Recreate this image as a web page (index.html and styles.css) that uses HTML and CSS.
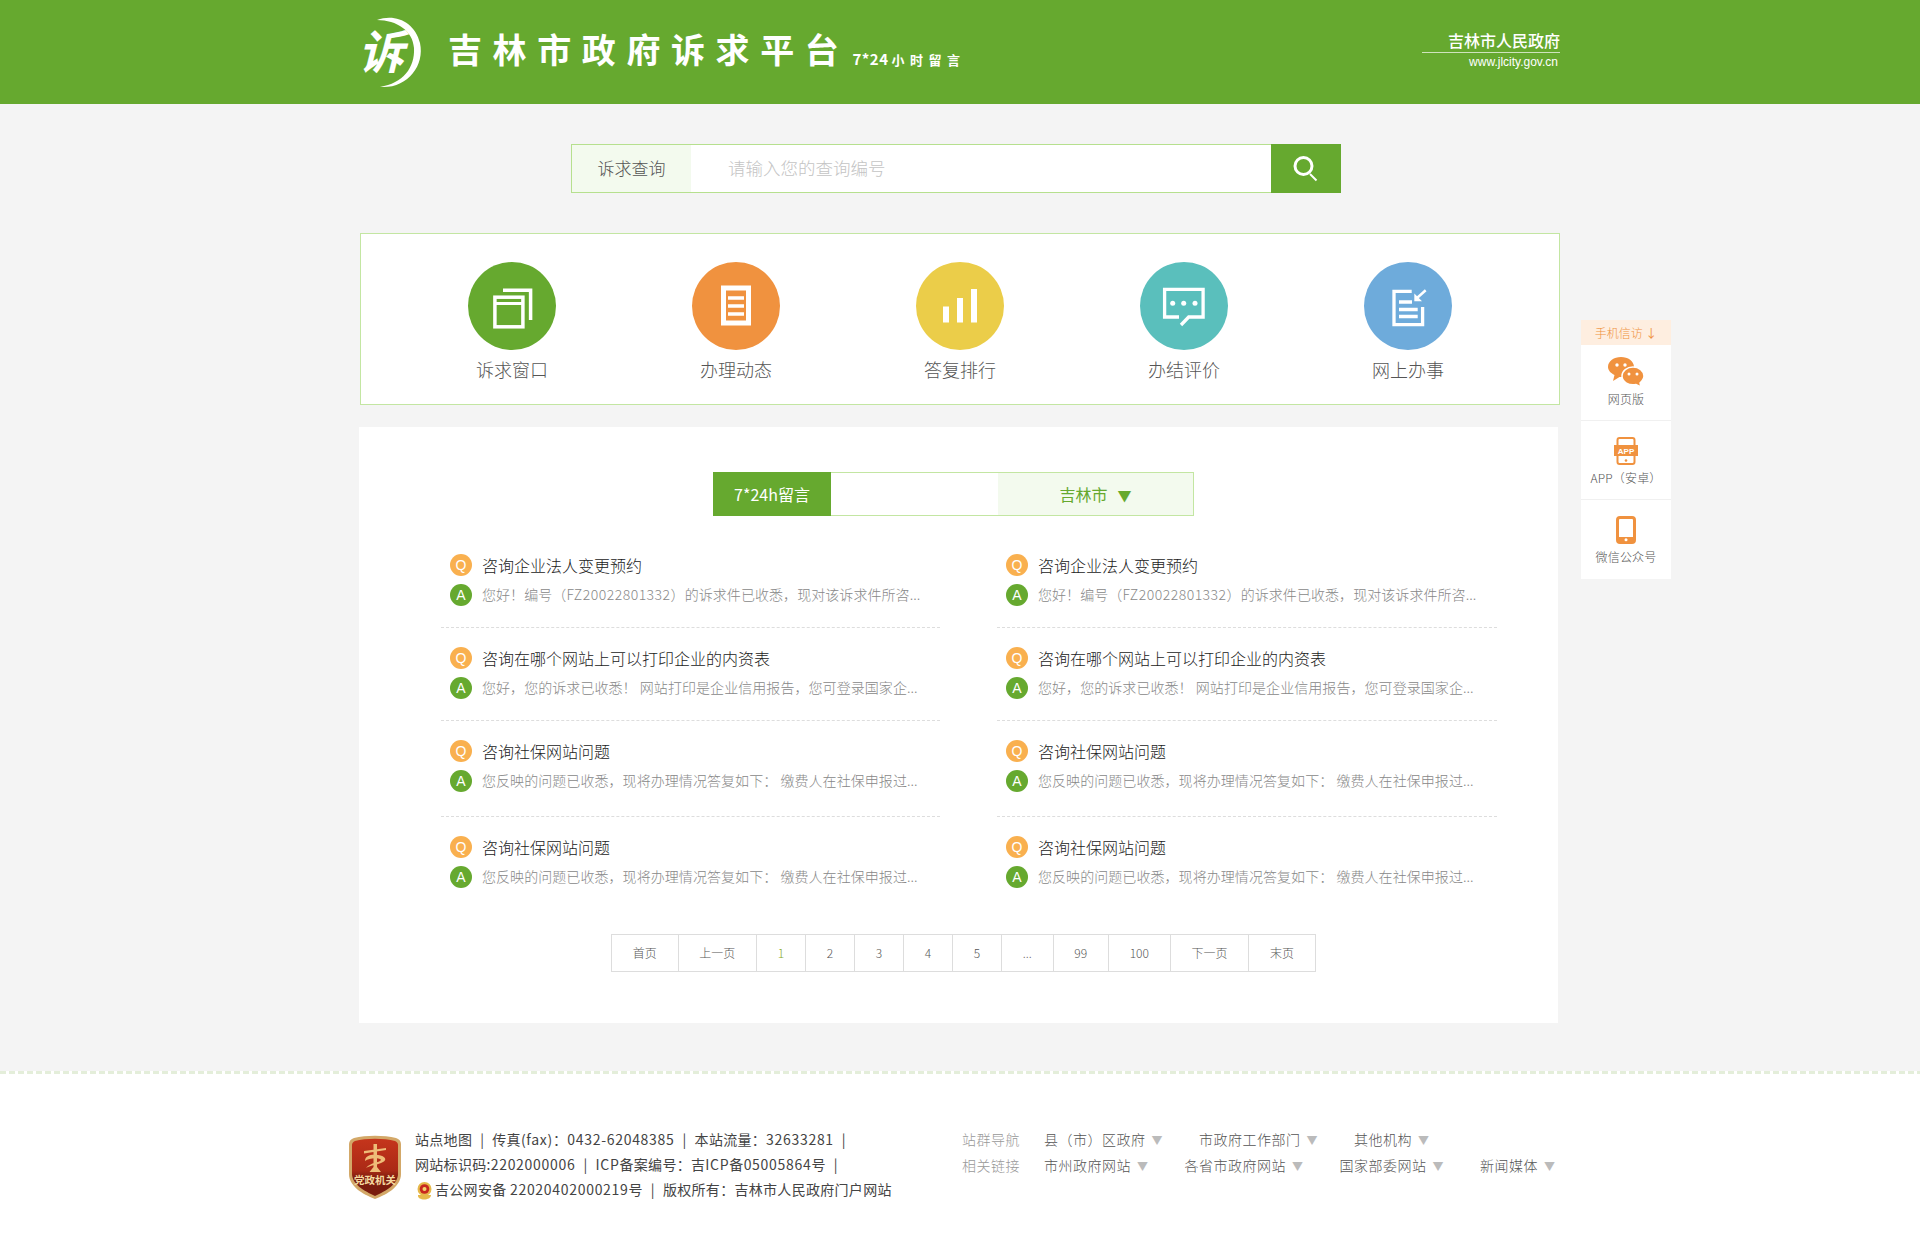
FILE: index.html
```html
<!DOCTYPE html>
<html lang="en">
<head>
    <meta charset="UTF-8">
    <meta name="viewport" content="width=device-width, initial-scale=1.0">
    <title>吉林市政府诉求平台</title>
    <link rel="stylesheet" href="styles.css">
</head>
<body>
    <header class="top">
        <div class="top-inner">
            <svg class="logo" width="64" height="76" viewBox="0 0 64 76">
                <path d="M16 6 C34 -1 54 8 59 29 C64 52 46 75 19 73 C42 69 54 54 53 34 C52 17 36 6 16 6 Z" fill="#fff"/>
                <text class="logo-char" x="-3" y="55">诉</text>
            </svg>
            <div class="title">吉林市政府诉求平台</div>
            <div class="subtitle"><span class="sub-num">7*24</span><span class="sub-cn">小时留言</span></div>
            <div class="gov">
                <div class="gov-name">吉林市人民政府</div>
                <div class="gov-url">www.jlcity.gov.cn</div>
            </div>
        </div>
    </header>

    <div class="search">
        <div class="search-label">诉求查询</div>
        <div class="search-input">请输入您的查询编号</div>
        <div class="search-btn">
            <svg width="28" height="28" viewBox="0 0 28 28" fill="none" stroke="#fff" stroke-width="3">
                <circle cx="11.500" cy="11" r="8.500"/>
                <path d="M18 19 L24.500 25.500" stroke-width="2"/>
            </svg>
        </div>
    </div>

    <nav class="nav">
        <a class="nav-item">
            <span class="circle c-green">
                <svg width="42" height="42" viewBox="0 0 42 42" fill="none" stroke="#fff" stroke-width="3.500">
                    <rect x="3.900" y="12.200" width="28" height="29.600"/>
                    <path d="M3 18.500 H33" stroke-width="3"/>
                    <path d="M12 5.300 H39.600 V35"/>
                </svg>
            </span>
            <span class="nav-text">诉求窗口</span>
        </a>
        <a class="nav-item">
            <span class="circle c-orange">
                <svg width="42" height="42" viewBox="0 0 42 42" fill="none" stroke="#fff" stroke-width="3.500">
                    <rect x="8.500" y="3" width="25" height="35" stroke-width="5"/>
                    <path d="M13 13 H29 M13 21 H29 M13 29 H29"/>
                </svg>
            </span>
            <span class="nav-text">办理动态</span>
        </a>
        <a class="nav-item">
            <span class="circle c-yellow">
                <svg width="42" height="42" viewBox="0 0 42 42" fill="#fff">
                    <rect x="4" y="21.500" width="6" height="16"/>
                    <rect x="18" y="13" width="6" height="24.500"/>
                    <rect x="32" y="4" width="6" height="33.500"/>
                </svg>
            </span>
            <span class="nav-text">答复排行</span>
        </a>
        <a class="nav-item">
            <span class="circle c-teal">
                <svg width="42" height="42" viewBox="0 0 42 42" fill="none" stroke="#fff" stroke-width="3.300">
                    <path d="M16 32 H1.600 V4.300 H40.100 V32 H25.700 L18 40"/>
                    <circle cx="9.700" cy="18.300" r="2.500" fill="#fff" stroke="none"/>
                    <circle cx="20.700" cy="18.300" r="2.500" fill="#fff" stroke="none"/>
                    <circle cx="32" cy="18.300" r="2.500" fill="#fff" stroke="none"/>
                </svg>
            </span>
            <span class="nav-text">办结评价</span>
        </a>
        <a class="nav-item">
            <span class="circle c-blue">
                <svg width="42" height="42" viewBox="0 0 42 42" fill="none" stroke="#fff" stroke-width="3.300">
                    <path d="M24.700 6.300 H7 V39.700 H35.600 V22"/>
                    <path d="M12 17 H25 M12 24.500 H30.700 M12 31.500 H30.700" stroke-width="3.500"/>
                    <path d="M38.700 5.300 L30 13" stroke-width="2.500"/>
                    <path d="M27.300 16.300 L27.300 8.500 L35 16.300 Z" fill="#fff" stroke="none"/>
                </svg>
            </span>
            <span class="nav-text">网上办事</span>
        </a>
    </nav>

    <main class="panel">
        <div class="tabs">
            <div class="tab-on">7*24h留言</div>
            <div class="tab-city">吉林市<span class="tab-arrow">▼</span></div>
        </div>

        <div class="list">
            <div class="row">
                <div class="q"><span class="ico ico-q">Q</span>咨询企业法人变更预约</div>
                <div class="a"><span class="ico ico-a">A</span>您好！编号（<span class="code">FZ20022801332</span>）的诉求件已收悉，现对该诉求件所咨...</div>
            </div>
            <div class="row">
                <div class="q"><span class="ico ico-q">Q</span>咨询企业法人变更预约</div>
                <div class="a"><span class="ico ico-a">A</span>您好！编号（<span class="code">FZ20022801332</span>）的诉求件已收悉，现对该诉求件所咨...</div>
            </div>
            <div class="row">
                <div class="q"><span class="ico ico-q">Q</span>咨询在哪个网站上可以打印企业的内资表</div>
                <div class="a"><span class="ico ico-a">A</span>您好，您的诉求已收悉！ 网站打印是企业信用报告，您可登录国家企...</div>
            </div>
            <div class="row">
                <div class="q"><span class="ico ico-q">Q</span>咨询在哪个网站上可以打印企业的内资表</div>
                <div class="a"><span class="ico ico-a">A</span>您好，您的诉求已收悉！ 网站打印是企业信用报告，您可登录国家企...</div>
            </div>
            <div class="row row-tall">
                <div class="q"><span class="ico ico-q">Q</span>咨询社保网站问题</div>
                <div class="a"><span class="ico ico-a">A</span>您反映的问题已收悉，现将办理情况答复如下： 缴费人在社保申报过...</div>
            </div>
            <div class="row row-tall">
                <div class="q"><span class="ico ico-q">Q</span>咨询社保网站问题</div>
                <div class="a"><span class="ico ico-a">A</span>您反映的问题已收悉，现将办理情况答复如下： 缴费人在社保申报过...</div>
            </div>
            <div class="row row-last">
                <div class="q"><span class="ico ico-q">Q</span>咨询社保网站问题</div>
                <div class="a"><span class="ico ico-a">A</span>您反映的问题已收悉，现将办理情况答复如下： 缴费人在社保申报过...</div>
            </div>
            <div class="row row-last">
                <div class="q"><span class="ico ico-q">Q</span>咨询社保网站问题</div>
                <div class="a"><span class="ico ico-a">A</span>您反映的问题已收悉，现将办理情况答复如下： 缴费人在社保申报过...</div>
            </div>
        </div>

        <div class="pager">
            <a>首页</a><a>上一页</a><a class="current">1</a><a>2</a><a>3</a><a>4</a><a>5</a><a>...</a><a>99</a><a>100</a><a>下一页</a><a>末页</a>
        </div>
    </main>

    <footer class="foot">
        <div class="foot-inner">
            <svg class="badge" width="54" height="66" viewBox="0 0 54 66">
                <defs>
                    <linearGradient id="shield" x1="0" y1="0" x2="0" y2="1">
                        <stop offset="0" stop-color="#c5351c"/>
                        <stop offset="0.55" stop-color="#ab2a16"/>
                        <stop offset="0.7" stop-color="#7a1c0e"/>
                        <stop offset="1" stop-color="#7a1c0e"/>
                    </linearGradient>
                </defs>
                <path d="M6 4 C18 1 36 1 48 4 C51 5 53 7 53 10 V40 C53 52 40 60 27 65 C14 60 1 52 1 40 V10 C1 7 3 5 6 4 Z" fill="#d3a868"/>
                <path d="M7 7 C18 4 36 4 47 7 C49 8 50 9 50 11 V40 C50 50 38 57 27 62 C16 57 4 50 4 40 V11 C4 9 5 8 7 7 Z" fill="url(#shield)"/>
                <path d="M25.500 10 H29 V33 L33 38 H21.500 L25.500 33 Z M16 17 L38 14 V16 L16 19.500 Z" fill="#eebd78"/>
                <path d="M17 27 C17 21 24 20 30 21 C38 22 39 26 35 28 C30 31 23 31 18 34 C23 28 31 29 33 26 C33 24 22 23 17 27 Z" fill="#eebd78"/>
                <text class="badge-text" x="27" y="50">党政机关</text>
            </svg>
            <div class="foot-info">
                <p>站点地图<i>|</i>传真<span class="num">(fax)</span>：<span class="num">0432-62048385</span><i>|</i>本站流量：<span class="num">32633281</span><i>|</i></p>
                <p>网站标识码:<span class="num">2202000006</span><i>|</i><span class="num">ICP</span>备案编号：吉<span class="num">ICP</span>备<span class="num">05005864</span>号<i>|</i></p>
                <p><svg class="police" width="19" height="21" viewBox="0 0 19 21">
                    <path d="M3 14 C2 20 16 20 16 14 Z" fill="#e6b94a"/>
                    <circle cx="9.500" cy="8" r="7" fill="#e6b94a"/>
                    <circle cx="9.500" cy="8" r="4.800" fill="#c8281e"/>
                    <circle cx="9.500" cy="8" r="2" fill="#f3d670"/>
                </svg>吉公网安备 <span class="num">22020402000219</span>号<i>|</i>版权所有：吉林市人民政府门户网站</p>
            </div>
            <div class="foot-links">
                <div class="link-row">
                    <span class="link-head">站群导航</span>
                    <span class="link">县（市）区政府<b>▼</b></span>
                    <span class="link">市政府工作部门<b>▼</b></span>
                    <span class="link">其他机构<b>▼</b></span>
                </div>
                <div class="link-row">
                    <span class="link-head">相关链接</span>
                    <span class="link">市州政府网站<b>▼</b></span>
                    <span class="link">各省市政府网站<b>▼</b></span>
                    <span class="link">国家部委网站<b>▼</b></span>
                    <span class="link">新闻媒体<b>▼</b></span>
                </div>
            </div>
        </div>
    </footer>

    <aside class="side">
        <div class="side-head">手机信访 <b>↓</b></div>
        <div class="side-item">
            <svg width="36" height="30" viewBox="0 0 36 30" fill="#f0923f">
                <path d="M13 0 C20 0 26 4 26 10 C26 16 20 20 13 20 L11.500 20 L5 24 L6.500 18 C2.500 16 0 13 0 10 C0 4 6 0 13 0 Z"/>
                <path d="M25 10 C31 10 36 14 36 19 C36 22 34 24 32 26 L33 30 L28 27.500 C21 29 14 25 14 19 C14 14 19 10 25 10 Z" stroke="#fff" stroke-width="1.500"/>
                <circle cx="9" cy="8" r="1.700" fill="#fff"/>
                <circle cx="17" cy="8" r="1.700" fill="#fff"/>
                <circle cx="21" cy="17" r="1.500" fill="#fff"/>
                <circle cx="29" cy="17" r="1.500" fill="#fff"/>
            </svg>
            <span>网页版</span>
        </div>
        <div class="side-item">
            <svg width="24" height="28" viewBox="0 0 24 28">
                <rect x="3.500" y="1" width="17" height="26" rx="2" fill="none" stroke="#f0923f" stroke-width="2"/>
                <rect x="0" y="8" width="24" height="11" fill="#f0923f"/>
                <text class="app-text" x="12" y="17">APP</text>
                <circle cx="12" cy="23.500" r="1.300" fill="#f0923f"/>
            </svg>
            <span>APP（安卓）</span>
        </div>
        <div class="side-item">
            <svg width="20" height="28" viewBox="0 0 20 28">
                <rect x="1.500" y="1.500" width="17" height="25" rx="2.500" fill="none" stroke="#f0923f" stroke-width="3"/>
                <rect x="1.500" y="21" width="17" height="5.500" fill="#f0923f"/>
                <circle cx="10" cy="23.800" r="1.500" fill="#fff"/>
            </svg>
            <span>微信公众号</span>
        </div>
    </aside>
</body>
</html>
```

FILE: styles.css
```css
body {
    margin: 0;
    background: #f4f4f4;
    font-family: "Noto Sans CJK SC", "Liberation Sans", sans-serif;
    color: #444;
    position: relative;
    font-weight: 300;
}
p {
    margin: 0;
}

.top {
    height: 104px;
    background: #66a92f;
    color: #fff;
}
.top-inner {
    width: 1200px;
    height: 104px;
    margin: 0 auto;
    display: flex;
    align-items: center;
}
.logo {
    margin-left: 1px;
    flex: none;
    overflow: visible;
}
.logo-char {
    font-size: 46px;
    font-weight: 700;
    font-style: italic;
    fill: #fff;
}
.title {
    margin-left: 23px;
    font-size: 34px;
    font-weight: 700;
    letter-spacing: 10.600px;
    line-height: 40px;
    white-space: nowrap;
    padding-bottom: 6px;
}
.subtitle {
    margin-left: 3px;
    margin-top: 12px;
    font-weight: 700;
    white-space: nowrap;
}
.sub-num {
    font-size: 15px;
    letter-spacing: 0.500px;
}
.sub-cn {
    margin-left: 3px;
    font-size: 13px;
    letter-spacing: 5.500px;
}
.gov {
    margin-left: auto;
    width: 138px;
    text-align: right;
    margin-top: -10px;
}
.gov-name {
    font-size: 16px;
    font-weight: 500;
    line-height: 32px;
    border-bottom: 1px solid #cfe3bd;
    height: 28px;
}
.gov-url {
    font-family: "Liberation Sans", sans-serif;
    font-weight: 400;
    font-size: 12px;
    line-height: 18px;
    padding-right: 2px;
}

.search {
    width: 770px;
    height: 49px;
    margin: 40px 0 0 calc(50% - 389px);
    box-sizing: border-box;
    border: 1px solid #b6e08e;
    display: flex;
    background: #fff;
}
.search-label {
    width: 119px;
    background: #f3faee;
    text-align: center;
    line-height: 45px;
    font-size: 17px;
    color: #555;
}
.search-input {
    flex: 1;
    padding-left: 37px;
    line-height: 45px;
    font-size: 17.500px;
    color: #c4c4c4;
}
.search-btn {
    width: 70px;
    margin: -1px;
    background: #66a92f;
    display: flex;
    align-items: center;
    justify-content: center;
}

.nav {
    width: 1200px;
    height: 172px;
    margin: 40px auto 0;
    box-sizing: border-box;
    border: 1px solid #c3e6a2;
    background: #fff;
    padding: 28px 39px 0;
    display: flex;
}
.nav-item {
    width: 224px;
    display: flex;
    flex-direction: column;
    align-items: center;
}
.circle {
    width: 88px;
    height: 88px;
    border-radius: 50%;
    display: flex;
    align-items: center;
    justify-content: center;
}
.circle svg {
    overflow: visible;
}
.c-green { background: #66a92f; }
.c-orange { background: #f0923f; }
.c-yellow { background: #ebcd49; }
.c-teal { background: #5abfbc; }
.c-blue { background: #6eabdb; }
.nav-text {
    margin-top: 5px;
    font-size: 18px;
    line-height: 28px;
    color: #555;
}

.panel {
    width: 1199px;
    height: 596px;
    margin: 22px 0 0 calc(50% - 601px);
    background: #fff;
    box-sizing: border-box;
    padding-top: 45px;
}
.tabs {
    width: 481px;
    height: 44px;
    margin-left: 354px;
    box-sizing: border-box;
    border: 1px solid #c3e6a2;
    display: flex;
    justify-content: space-between;
}
.tab-on {
    width: 118px;
    margin: -1px 0 -1px -1px;
    background: #66a92f;
    color: #fff;
    text-align: center;
    font-size: 16px;
    font-weight: 400;
    line-height: 44px;
}
.tab-city {
    width: 195px;
    background: #f3faee;
    color: #66a92f;
    text-align: center;
    font-size: 16px;
    font-weight: 400;
    line-height: 42px;
}
.tab-arrow {
    margin-left: 10px;
    font-size: 14px;
}

.list {
    margin: 34px 0 0 82px;
    width: 1056px;
    display: grid;
    grid-template-columns: 499px 500px;
    column-gap: 57px;
}
.row {
    height: 93px;
    box-sizing: border-box;
    border-bottom: 1px dashed #ddd;
    padding-top: 0;
}
.row + .row + .row {
    padding-top: 15px;
}
.row:nth-child(-n+2) {
    height: 78px;
}
.row-tall {
    height: 96px;
}
.row-last {
    border-bottom: none;
    height: 90px;
    padding-top: 16px;
}
.q {
    display: flex;
    align-items: center;
    height: 30px;
    font-size: 16px;
    color: #222;
    padding-left: 9px;
}
.a {
    display: flex;
    align-items: center;
    height: 30px;
    margin-top: -1px;
    font-size: 14px;
    letter-spacing: 0.060px;
    color: #888;
    padding-left: 9px;
    white-space: nowrap;
}
.code {
    letter-spacing: 0.500px;
}
.ico {
    width: 22px;
    height: 22px;
    border-radius: 50%;
    margin-right: 10px;
    flex: none;
    color: #fff;
    font-size: 14px;
    line-height: 22px;
    text-align: center;
    font-family: "Liberation Sans", sans-serif;
    font-weight: 400;
    letter-spacing: 0;
}
.ico-q { background: #f9b04f; }
.ico-a {
    background: #66a92f;
    margin-top: 2px;
}

.pager {
    margin-top: 27px;
    margin-left: 253px;
    display: flex;
    height: 38px;
}
.pager a {
    box-sizing: border-box;
    height: 38px;
    min-width: 50px;
    padding: 0 20.750px;
    border: 1px solid #ddd;
    margin-left: -1px;
    font-size: 12px;
    line-height: 36px;
    text-align: center;
    color: #555;
}
.pager .current {
    color: #86a81d;
}

.foot {
    margin-top: 48px;
    height: 180px;
    background: #fff;
    background-image: repeating-linear-gradient(90deg, #e4eeda 0, #e4eeda 6px, transparent 6px, transparent 9px);
    background-size: 100% 3px;
    background-repeat: no-repeat;
}
.foot-inner {
    margin-left: calc(50% - 612px);
    padding-top: 56px;
    display: flex;
    align-items: flex-start;
}
.badge {
    flex: none;
    margin-top: 7px;
}
.badge-text {
    font-size: 10.500px;
    font-weight: 700;
    fill: #f6d9a0;
    text-anchor: middle;
}
.foot-info {
    flex: none;
    margin-left: 13px;
    width: 547px;
    font-size: 14px;
    font-weight: 400;
    letter-spacing: 0.300px;
    line-height: 25px;
    color: #444;
    white-space: nowrap;
}
.foot-info i {
    font-style: normal;
    margin: 0 8px;
}
.num {
    letter-spacing: 0.700px;
}
.police {
    vertical-align: middle;
    margin-right: 1px;
}
.foot-links {
    flex: none;
    font-size: 14px;
    letter-spacing: 0.500px;
    line-height: 25px;
    color: #555;
    white-space: nowrap;
}
.link-row {
    display: flex;
}
.link-head {
    color: #999;
    width: 82px;
}
.link {
    margin-right: 36px;
}
.link b {
    margin-left: 6px;
    color: #bbb;
    font-size: 11px;
    font-weight: 400;
}

.side {
    position: absolute;
    left: 1581px;
    top: 320px;
    width: 90px;
    background: #fff;
    font-size: 12px;
    color: #555;
    text-align: center;
}
.side-head {
    height: 25px;
    line-height: 25px;
    background: #feeee0;
    color: #f0923f;
}
.side-item {
    height: 79px;
    box-sizing: border-box;
    padding-top: 15px;
    border-bottom: 1px solid #f0f0f0;
    display: flex;
    flex-direction: column;
    align-items: center;
    justify-content: flex-start;
}
.side-item:nth-child(2) {
    height: 76px;
    padding-top: 12px;
}
.side-item:last-child {
    border-bottom: none;
}
.side-item svg {
    height: 30px;
    flex: none;
}
.side-item span {
    margin-top: 3px;
    line-height: 18px;
    letter-spacing: 0.200px;
    white-space: nowrap;
}
.app-text {
    font-family: "Liberation Sans", sans-serif;
    font-size: 8px;
    font-weight: 700;
    fill: #fff;
    text-anchor: middle;
}
```
